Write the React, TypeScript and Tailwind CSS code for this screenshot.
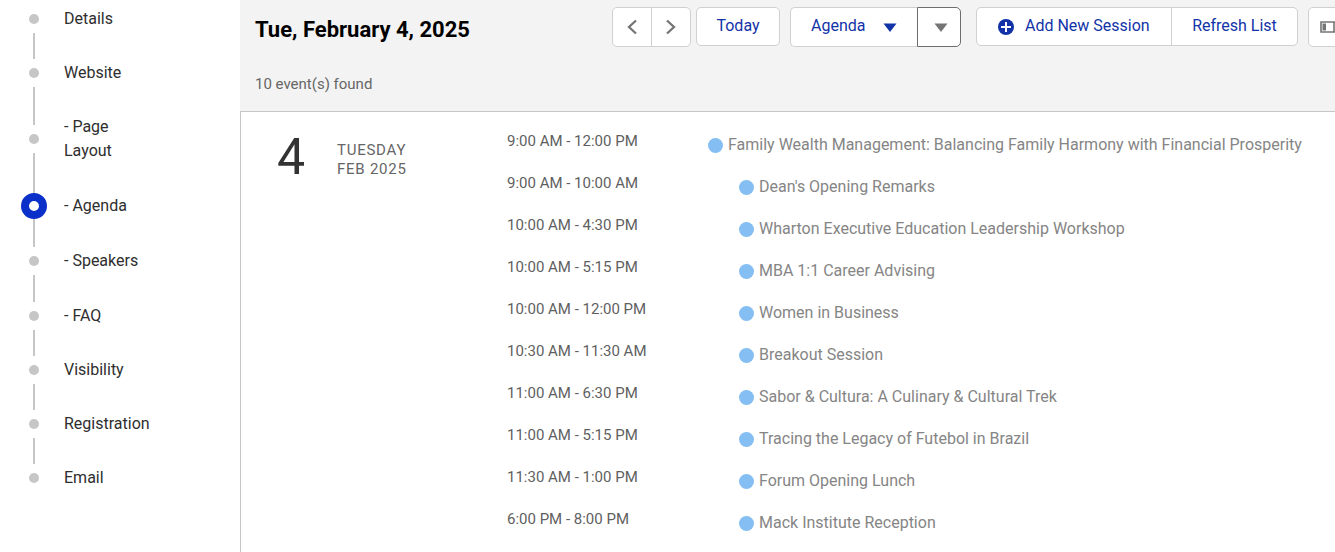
import { clsx } from "clsx";
import type { ReactNode } from "react";

type Step = { label: string; sub?: boolean; active?: boolean };

const steps: Step[] = [
	{ label: "Details" },
	{ label: "Website" },
	{ label: "- Page Layout", sub: true },
	{ label: "- Agenda", sub: true, active: true },
	{ label: "- Speakers", sub: true },
	{ label: "- FAQ", sub: true },
	{ label: "Visibility" },
	{ label: "Registration" },
	{ label: "Email" },
];

const sessions = [
	{
		time: "9:00 AM - 12:00 PM",
		title: "Family Wealth Management: Balancing Family Harmony with Financial Prosperity",
		root: true,
	},
	{ time: "9:00 AM - 10:00 AM", title: "Dean's Opening Remarks" },
	{ time: "10:00 AM - 4:30 PM", title: "Wharton Executive Education Leadership Workshop" },
	{ time: "10:00 AM - 5:15 PM", title: "MBA 1:1 Career Advising" },
	{ time: "10:00 AM - 12:00 PM", title: "Women in Business" },
	{ time: "10:30 AM - 11:30 AM", title: "Breakout Session" },
	{ time: "11:00 AM - 6:30 PM", title: "Sabor & Cultura: A Culinary & Cultural Trek" },
	{ time: "11:00 AM - 5:15 PM", title: "Tracing the Legacy of Futebol in Brazil" },
	{ time: "11:30 AM - 1:00 PM", title: "Forum Opening Lunch" },
	{ time: "6:00 PM - 8:00 PM", title: "Mack Institute Reception" },
];

function Connector({ hidden }: { hidden: boolean }) {
	return <span className={clsx("w-0.5 flex-1", !hidden && "bg-[#c6c6c6]")} />;
}

function StepItem({ step, first, last }: { step: Step; first: boolean; last: boolean }) {
	return (
		<li className={clsx("flex gap-[17px]", step.sub ? "min-h-[55px]" : "min-h-[54px]")}>
			<span className="flex w-[26px] flex-col items-center">
				<Connector hidden={first} />
				{step.active ? (
					<span className="size-[26px] rounded-full border-8 border-[#0b2fc9] bg-white" />
				) : (
					<span className="my-[9px] size-2.5 rounded-full bg-[#c6c6c6]" />
				)}
				<Connector hidden={last} />
			</span>
			<a href="#" className="w-24 self-center py-[15px] leading-6 text-[#2e2e2e]">
				{step.label}
			</a>
		</li>
	);
}

function ButtonGroup({ children, className }: { children: ReactNode; className?: string }) {
	return (
		<div
			className={clsx(
				"flex shrink-0 rounded-[5px] border border-[#d0d0d0] bg-white text-[#1233a8]",
				className,
			)}
		>
			{children}
		</div>
	);
}

function Caret() {
	return (
		<svg className="h-[9px] w-3.5" viewBox="0 0 14 9" fill="currentColor" aria-hidden="true">
			<path d="M.5.5h13L7 9z" />
		</svg>
	);
}

function Chevron({ d }: { d: string }) {
	return (
		<svg
			className="h-4 w-3"
			viewBox="0 0 12 16"
			fill="none"
			stroke="#757575"
			strokeWidth="2.3"
			aria-hidden="true"
		>
			<path d={d} />
		</svg>
	);
}

function Toolbar() {
	return (
		<div className="flex items-start">
			<h1 className="w-[357px] shrink-0 pt-[9px] text-[22px] leading-7 font-bold text-black">
				Tue, February 4, 2025
			</h1>
			<ButtonGroup className="h-10">
				<button type="button" aria-label="Previous" className="flex w-[38px] items-center justify-center">
					<Chevron d="M10 1.5 3 8l7 6.5" />
				</button>
				<button
					type="button"
					aria-label="Next"
					className="flex w-[39px] items-center justify-center border-l border-[#d0d0d0]"
				>
					<Chevron d="M2 1.5 9 8l-7 6.5" />
				</button>
			</ButtonGroup>
			<ButtonGroup className="ml-[5px] h-[39px]">
				<button type="button" className="w-[82px] pb-0.5">
					Today
				</button>
			</ButtonGroup>
			<div className="ml-2.5 flex h-10 shrink-0 text-[#1233a8]">
				<button
					type="button"
					className="flex w-[127px] items-center justify-between rounded-l-[5px] border border-r-0 border-[#d0d0d0] bg-white pr-5 pl-5"
				>
					<span className="pb-[3px]">Agenda</span>
					<Caret />
				</button>
				<button
					type="button"
					aria-label="More views"
					className="flex w-11 items-center justify-center rounded-r-[5px] border border-[#6e6e6e] bg-white pl-1 text-[#757575]"
				>
					<Caret />
				</button>
			</div>
			<ButtonGroup className="ml-[15px] h-[39px]">
				<button type="button" className="flex w-[194px] items-center gap-[11px] pl-[21px]">
					<svg className="size-4" viewBox="0 0 16 16" aria-hidden="true">
						<circle cx="8" cy="8" r="8" fill="#1233a8" />
						<path d="M8 3v10M3 8h10" stroke="#fff" strokeWidth="2" />
					</svg>
					<span className="pb-0.5">Add New Session</span>
				</button>
				<button type="button" className="w-[126px] border-l border-[#d0d0d0] pb-0.5">
					Refresh List
				</button>
			</ButtonGroup>
			<ButtonGroup className="ml-2.5 h-10">
				<button type="button" aria-label="Toggle panel" className="flex w-12 items-center pl-[11px]">
					<svg className="h-3 w-[22px] shrink-0" viewBox="0 0 22 12" aria-hidden="true">
						<path d="M1 1h20v10H1z" fill="#fff" stroke="#757575" strokeWidth="1.6" />
						<path d="M2.5 2.5H6v7H2.5z" fill="#757575" />
						<path d="M14 1v10" stroke="#757575" strokeWidth="1.6" />
					</svg>
				</button>
			</ButtonGroup>
		</div>
	);
}

function AgendaTable() {
	return (
		<table className="w-full">
			<tbody>
				{sessions.map((session, i) => (
					<tr key={session.title} className="h-[42px]">
						{i === 0 && (
							<th
								rowSpan={sessions.length}
								scope="rowgroup"
								className="w-[266px] pt-2.5 pl-9 text-left align-top font-normal"
							>
								<div className="flex items-start gap-[30px]">
									<span className="w-[30px] text-[50px] leading-12 text-[#333]">4</span>
									<span className="pt-2 text-[15px] leading-[19px] tracking-wider text-[#666] uppercase">
										Tuesday
										<br />
										Feb 2025
									</span>
								</div>
							</th>
						)}
						<td className="w-[201px] pt-1.5 align-top text-[15px] leading-6 whitespace-nowrap text-[#5f5f5f]">
							{session.time}
						</td>
						<td className={clsx("pt-2.5 align-top whitespace-nowrap", !session.root && "pl-[31px]")}>
							<a href="#" className="flex items-center gap-[5px] leading-6 text-[#858585]">
								<span className="size-[15px] shrink-0 rounded-full bg-[#84bef2]" />
								{session.title}
							</a>
						</td>
					</tr>
				))}
			</tbody>
		</table>
	);
}

export default function App() {
	return (
		<div className="flex min-h-screen overflow-hidden bg-white font-['Roboto',sans-serif] text-base">
			<nav aria-label="Event setup" className="w-60 shrink-0 pl-[21px]">
				<ul className="-mt-2">
					{steps.map((step, i) => (
						<StepItem key={step.label} step={step} first={i === 0} last={i === steps.length - 1} />
					))}
				</ul>
			</nav>
			<main className="flex min-w-0 flex-1 flex-col overflow-hidden">
				<header className="border-b border-[#c6c6c6] bg-[#f3f3f3] pt-[7px] pb-[15px] pl-[15px]">
					<Toolbar />
					<p className="mt-[25px] text-[15px] leading-6 text-[#666]">10 event(s) found</p>
				</header>
				<section className="flex-1 border-l border-[#c6c6c6] pt-[11px]">
					<AgendaTable />
				</section>
			</main>
		</div>
	);
}
